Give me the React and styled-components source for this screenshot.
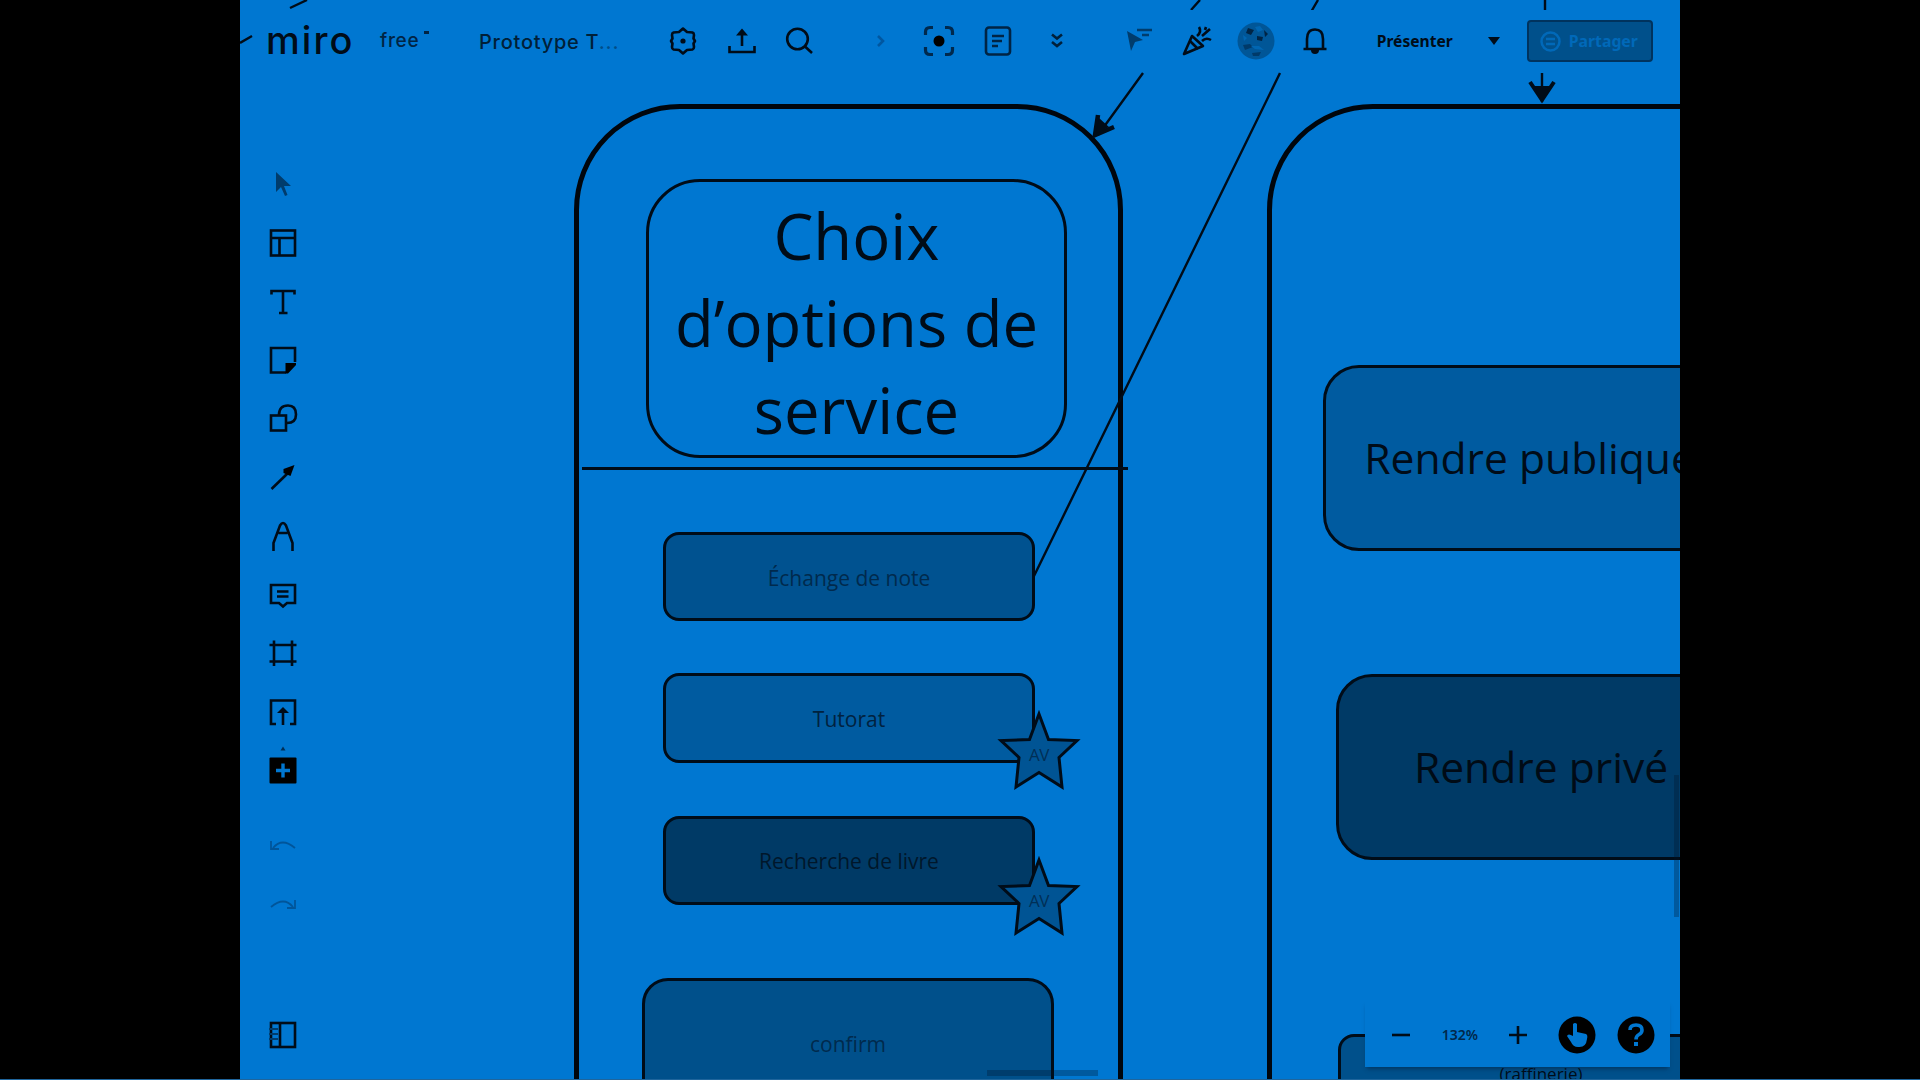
import React from 'react';
import styled, { createGlobalStyle, css } from 'styled-components';

const BLUE = '#0077d1';
const INK = '#000c18';

const GlobalStyle = createGlobalStyle`
  * {
    box-sizing: border-box;
  }

  body {
    margin: 0;
    background: #000;
    overflow: hidden;
  }
`;

const Screen = styled.div`
  position: relative;
  display: flex;
  justify-content: center;
  width: 1920px;
  height: 1080px;
  background: #000;
`;

const BottomEdge = styled.div`
  position: absolute;
  left: 0;
  right: 0;
  bottom: 0;
  height: 1px;
  background: #1f659c;
`;

const Board = styled.main`
  position: relative;
  width: 1440px;
  height: 1080px;
  overflow: hidden;
  background: ${BLUE};
  color: ${INK};
  font-family: 'Open Sans', 'Noto Sans', sans-serif;
`;

/* free canvas: every node carries its own board position */
const Node = styled.div`
  position: absolute;
  left: ${props => props.$x}px;
  top: ${props => props.$y}px;
  width: ${props => props.$w}px;
  height: ${props => props.$h}px;
  display: flex;
  align-items: center;
  justify-content: center;
  text-align: center;
  white-space: nowrap;
  border: 3px solid ${INK};
`;

const Phone = styled(Node)`
  border-width: 5px;
  border-color: #00060d;
  border-radius: 106px;
`;

const TitleNode = styled(Node)`
  border-radius: 54px;
  padding-top: 10px;
  font-size: 63.4px;
  line-height: 86.8px;
  white-space: pre-line;
`;

const OptionNode = styled(Node)`
  border-radius: ${props => props.$radius || 16}px;
  background: ${props => props.$fill};
  color: ${props => props.$color};
  font-size: ${props => props.$size || 21}px;
  line-height: 1.36;
  padding-top: ${props => props.$drop || 0}px;
`;

const Lines = styled.svg`
  position: absolute;
  inset: 0;
`;

const StarNode = styled.div`
  position: absolute;
  left: ${props => props.$x}px;
  top: ${props => props.$y}px;
  width: 84px;
  height: 82px;
  display: grid;
  place-items: center;
  color: #002f56;
  font-size: 17px;
  letter-spacing: -0.5px;

  svg,
  span {
    grid-area: 1 / 1;
  }

  span {
    padding-top: 7px;
  }
`;

const Header = styled.header`
  position: absolute;
  top: 10px;
  left: 13px;
  right: 12px;
  height: 62px;
  display: flex;
  font-family: Inter, 'Noto Sans', sans-serif;
`;

const HeaderGroup = styled.div`
  display: flex;
  align-items: center;
  background: ${BLUE};
  ${props => props.$width && css`
    width: ${props.$width}px;
  `}
  ${props => props.$before && css`
    margin-left: ${props.$before}px;
  `}
`;

const Slot = styled.div`
  display: flex;
  flex: none;
  align-items: center;
  justify-content: center;
  width: 58.6px;
  height: 62px;

  svg {
    display: block;
  }
`;

const Logo = styled.div`
  width: 127px;
  padding: 0 0 2px 13px;
  font-size: 38px;
  font-weight: 500;
  letter-spacing: 2.1px;
  line-height: 44px;
`;

const Plan = styled.div`
  width: 87px;
  display: flex;
  gap: 5px;
  font-size: 19px;
  font-weight: 500;
  line-height: 24px;
  letter-spacing: 0.7px;
  color: #002444;

  sup {
    width: 5px;
    height: 3px;
    margin-top: 2px;
    background: #002444;
  }
`;

const BoardName = styled.div`
  width: 187px;
  padding: 2px 0 0 12px;
  font-size: 20px;
  font-weight: 500;
  letter-spacing: 0.75px;
  color: #002038;

  span {
    color: #004d88;
  }
`;

const Present = styled.button`
  display: flex;
  align-items: center;
  gap: 35px;
  margin-left: 33px;
  padding: 0;
  border: 0;
  background: none;
  color: ${INK};
  font: 700 15.6px 'Noto Sans', sans-serif;
`;

const Share = styled.button`
  display: flex;
  align-items: center;
  gap: 8px;
  width: 126px;
  height: 42px;
  margin-left: 27px;
  padding: 0 0 0 11px;
  border: 2px solid #00335e;
  border-radius: 4px;
  background: #00508b;
  color: #0069b9;
  font: 700 15.8px 'Noto Sans', sans-serif;
`;

const Sidebar = styled.nav`
  position: absolute;
  left: 14px;
  top: 155px;
  width: 58.6px;
  display: flex;
  flex-direction: column;
`;

const Tool = styled(Slot)`
  height: 58.7px;
  color: ${props => (props.$faded ? '#00559a' : INK)};
  ${props => props.$gap && css`
    margin-top: ${props.$gap}px;
  `}
`;

const ZoomBar = styled.footer`
  position: absolute;
  left: 1125px;
  top: 1000px;
  width: 305px;
  height: 67px;
  display: flex;
  align-items: center;
  padding: 2px 0 0 7px;
  background: ${BLUE};
  box-shadow: 0 4px 4px -2px rgba(0, 30, 60, 0.5);
`;

const ZoomValue = styled(Slot)`
  color: #00284b;
  font: 600 14px 'Noto Sans', sans-serif;
`;

const Scrollbar = styled.div`
  position: absolute;
  left: ${props => props.$x}px;
  top: ${props => props.$y}px;
  width: ${props => props.$w}px;
  height: ${props => props.$h}px;
  background: rgba(0, 20, 40, 0.3);
`;

const Icon = ({ children, size = 30, width = 2.6, color = 'currentColor' }) => (
  <svg width={size} height={size} viewBox="0 0 30 30" fill="none" stroke={color} strokeWidth={width} overflow="visible">
    {children}
  </svg>
);

const GearIcon = () => (
  <Icon>
    <path
      d="M15 2.500 19 6 24.500 6.500Q26 7 26 9L25.500 12.500 27 15 25.500 17.500 26 21Q26 23 24.500 23.500L19 24 15 27.500 11 24 5.500 23.500Q4 23 4 21L4.500 17.500 3 15 4.500 12.500 4 9Q4 7 5.500 6.500L11 6Z"
      strokeLinejoin="round"
    />
    <circle cx="15" cy="15" r="2.600" fill="currentColor" stroke="none" />
  </Icon>
);

const ExportIcon = () => (
  <Icon>
    <path d="M15 20V5M2.500 20v6h25v-6" />
    <path d="M9 9.500 15 2.500l6 7Z" fill="currentColor" stroke="none" />
  </Icon>
);

const SearchIcon = () => (
  <Icon>
    <circle cx="12.500" cy="13" r="10.300" />
    <path d="m20 20.500 7 6.500" />
  </Icon>
);

const FocusIcon = () => (
  <Icon width={3.2} color="#00294d">
    <path d="M1.500 9V6q0-4.500 4.500-4.500H9M21 1.500h3q4.500 0 4.500 4.500v3M28.500 21v3q0 4.500-4.500 4.500h-3M9 28.500H6q-4.500 0-4.500-4.500v-3" />
    <circle cx="15" cy="15" r="5.500" fill="#000" stroke="none" />
  </Icon>
);

const NotesIcon = () => (
  <Icon color="#002444">
    <rect x="3" y="1.500" width="24" height="27" rx="3" />
    <path d="M9 10h12M9 15h10M9 20h6" />
  </Icon>
);

const PartyIcon = () => (
  <Icon>
    <path d="M10 10 21 20 2 28Z" strokeLinejoin="round" />
    <path d="m8 15 8 8M15 10q5-4 2-9M20 15q4-4 9-1M20 10l8-7M23 4l1-3" />
  </Icon>
);

const BellIcon = () => (
  <Icon>
    <path d="M4.500 23h23M8 23V13q0-9.500 8-9.500t8 9.500v10" />
    <path d="M12 24h8q0 4-4 4t-4-4Z" fill="currentColor" stroke="none" />
  </Icon>
);

const Avatar = () => (
  <svg width="38" height="38" viewBox="0 0 38 38">
    <circle cx="19" cy="19" r="18.500" fill="#005697" />
    <path d="M11 6l6 2-3 5-5-2zM20 14l6 1-1 4-5-1zM27 8l4 4-3 3z" fill="#002444" />
    <path d="M6 23l7-1 3 3-8 3zM15 31l9-1-2 4h-6z" fill="#003a69" />
    <path d="M18 5l5-1 3 4-5 2zM14 24h8l5 4-9-1zM6 13l4 3-3 3z" fill="#0066b2" />
  </svg>
);

const TOOLS = [
  { name: 'select', icon: <path d="M8 3v20l5-5 4 9 2.500-1-3.500-9h7Z" fill="#003c6c" stroke="none" /> },
  {
    name: 'templates',
    icon: (
      <>
        <rect x="3" y="2.500" width="24" height="25" />
        <path d="M3 10h24M11.500 10v17" />
      </>
    ),
  },
  { name: 'text', icon: <path d="M3.500 7.500V4h23v3.500M15 4v22M11 26h8.500" /> },
  {
    name: 'sticky',
    icon: (
      <>
        <path d="M27 17V3H3v24.500h15" />
        <path d="M17.500 28.500V18H28v2l-8 8.500Z" fill="#000" stroke="none" />
      </>
    ),
  },
  {
    name: 'shapes',
    icon: (
      <>
        <rect x="3" y="11.500" width="15" height="15" />
        <path d="M11 11q0-9.500 9-9.500 8 0 8 9 0 8.500-9 8.500" />
      </>
    ),
  },
  {
    name: 'line',
    icon: (
      <>
        <path d="M3.500 26 21 9" />
        <path d="m15.500 6 11-4-4 11-7-3Z" fill="#000" stroke="none" />
      </>
    ),
  },
  { name: 'pen', icon: <path d="M5.500 30V22L12 4.500Q15-.5 18 4.500L24.500 22v8M10.500 12h9" /> },
  {
    name: 'comment',
    icon: (
      <>
        <path d="M3 5h24v18h-8l-4 3.500L11 23H3Z" />
        <path d="M9 11.500h11.500M9 16.500h11.500" />
      </>
    ),
  },
  { name: 'frame', icon: <path d="M1.500 6h27M1.500 22.500h27M6 1.500v25.500M24 1.500v25.500" /> },
  {
    name: 'upload',
    icon: (
      <>
        <path d="M8 26H3V2.500h24V26h-5M15 27V12" />
        <path d="m9 15 6-6 6 6Z" fill="currentColor" stroke="none" />
      </>
    ),
  },
  {
    name: 'more',
    icon: (
      <>
        <rect x="1.500" y="1.500" width="27" height="26" rx="1" fill="#000" stroke="none" />
        <path d="M15 7.500v14M8 14.500h14" stroke={BLUE} strokeWidth="3.400" />
        <path d="M12.500-5.500l2.500-4 2.500 4z" fill="#002f56" stroke="none" />
      </>
    ),
  },
];

const STAR = 'M42 4 51.500 29.500 80 30.500 62 47.500 65 77 42 62.500 19 77 22 47.500 4 30.500 32.500 29.500Z';

const Star = ({ x, y }) => (
  <StarNode $x={x} $y={y}>
    <svg width="84" height="82" viewBox="0 0 84 82">
      <path d={STAR} fill="#005494" stroke={INK} strokeWidth="3" />
    </svg>
    <span>AV</span>
  </StarNode>
);

const App = () => (
  <>
    <GlobalStyle />
    <Screen>
      <Board>
        <Phone $x={334} $y={104} $w={549} $h={1180} />
        <Phone $x={1027} $y={104} $w={549} $h={1180} />

        <TitleNode $x={406} $y={179} $w={421} $h={279}>
          {'Choix\nd’options de\nservice'}
        </TitleNode>

        <OptionNode $x={423} $y={532} $w={372} $h={89} $fill="#005290" $color="#002a4d" $drop={3}>
          Échange de note
        </OptionNode>
        <OptionNode $x={423} $y={673} $w={372} $h={90} $fill="#005ba0" $color="#00223f" $drop={2}>
          Tutorat
        </OptionNode>
        <OptionNode $x={423} $y={816} $w={372} $h={89} $fill="#003a66" $color="#00172b" $drop={2}>
          Recherche de livre
        </OptionNode>
        <OptionNode $x={402} $y={978} $w={412} $h={132} $radius={26} $fill="#00508b" $color="#002a4d">
          confirm
        </OptionNode>

        <OptionNode $x={1083} $y={365} $w={413} $h={186} $radius={36} $size={42.6} $fill="#005ba0" $color={INK}>
          Rendre publique
        </OptionNode>
        <OptionNode $x={1096} $y={674} $w={410} $h={186} $radius={36} $size={42.6} $fill="#003a66" $color="#000b16">
          Rendre privé
        </OptionNode>
        <OptionNode $x={1098} $y={1034} $w={406} $h={80} $radius={16} $size={17} $fill="#00508b" $color={INK}>
          (raffinerie)
        </OptionNode>

        <Lines width="1440" height="1080" fill="none" stroke={INK} strokeWidth="2.4">
          <path d="M342 468.500H888" strokeWidth="3" />
          <path d="M67 0 50 8M0 43 12 36" />
          <path d="M960 0 951 10M903 73 858 135" />
          <path d="m858 115-3 20 19-8" strokeWidth="4.500" />
          <path d="m859 118-3 16 13-7Z" fill={INK} stroke="none" />
          <path d="M1078 0 1071 12M1040 73 794 576" />
          <path d="M1305 0v12M1302 73v29" />
          <path d="m1290 82 12 18 12-18" strokeWidth="4" />
          <path d="m1294 86 8 14 8-14Z" fill={INK} stroke="none" />
        </Lines>

        <Star x={757} y={710} />
        <Star x={757} y={856} />

        <Header>
          <HeaderGroup $width={578}>
            <Logo>miro</Logo>
            <Plan>
              free<sup />
            </Plan>
            <BoardName>
              Prototype T<span>...</span>
            </BoardName>
            <Slot><GearIcon /></Slot>
            <Slot><ExportIcon /></Slot>
            <Slot><SearchIcon /></Slot>
          </HeaderGroup>

          <HeaderGroup $before={20.5}>
            <Slot>
              <Icon color="#0057a0">
                <path d="m12 10 5 5-5 5" />
              </Icon>
            </Slot>
            <Slot><FocusIcon /></Slot>
            <Slot><NotesIcon /></Slot>
            <Slot>
              <Icon color="#00203a">
                <path d="m10 8.500 5 4 5-4M10 16l5 4 5-4" />
              </Icon>
            </Slot>
          </HeaderGroup>

          <HeaderGroup $width={558} $before={23.5}>
            <Slot>
              <Icon color="#003c6c">
                <path d="m3 5 4 20 4-9 8-2Z" fill="#003c6c" stroke="none" />
                <path d="M13 4h15M18 9h7" />
              </Icon>
            </Slot>
            <Slot><PartyIcon /></Slot>
            <Slot><Avatar /></Slot>
            <Slot><BellIcon /></Slot>
            <Present>
              Présenter
              <svg width="12" height="8" viewBox="0 0 12 8">
                <path d="M0 0h12L6 8Z" fill={INK} />
              </svg>
            </Present>
            <Share>
              <svg width="21" height="21" viewBox="0 0 21 21" fill="none" stroke="#0069b9" strokeWidth="2.500">
                <circle cx="10.500" cy="10.500" r="9" />
                <path d="M6 8h9M6 13h9" />
              </svg>
              Partager
            </Share>
          </HeaderGroup>
        </Header>

        <Sidebar>
          {TOOLS.map(tool => (
            <Tool key={tool.name}>
              <Icon>{tool.icon}</Icon>
            </Tool>
          ))}
          <Tool $faded $gap={16}>
            <Icon width={1.8}>
              <path d="M5 17q9-11 22 0M3 10v8h8" />
            </Icon>
          </Tool>
          <Tool $faded>
            <Icon width={1.8}>
              <path d="M25 17Q16 6 3 17M27 10v8h-8" />
            </Icon>
          </Tool>
          <Tool $gap={72}>
            <Icon>
              <rect x="3" y="3" width="24" height="24" />
              <path d="M12 3v24" />
              <path d="M1 9h9M1 14h9M1 19h9" stroke="#003c6c" strokeWidth="2" />
            </Icon>
          </Tool>
        </Sidebar>

        <Scrollbar $x={1434} $y={775} $w={5} $h={142} />
        <Scrollbar $x={747} $y={1070} $w={111} $h={6} />

        <ZoomBar>
          <Slot>
            <Icon><path d="M6 15h18" /></Icon>
          </Slot>
          <ZoomValue>132%</ZoomValue>
          <Slot>
            <Icon><path d="M6 15h18M15 6v18" /></Icon>
          </Slot>
          <Slot>
            <svg width="38" height="38" viewBox="0 0 38 38">
              <circle cx="19" cy="19" r="18.500" fill="#000" />
              <path d="M15 8q2-2 4 0v8l9 2q2 1 1 5-1 9-9 8-5 0-7-5l-4-6q1-3 6 0Z" fill={BLUE} />
            </svg>
          </Slot>
          <Slot>
            <svg width="38" height="38" viewBox="0 0 38 38">
              <circle cx="19" cy="19" r="18.500" fill="#000" />
              <path d="M13 14q0-5 6-5t6 5q0 3-3 4.500t-3 5" fill="none" stroke={BLUE} strokeWidth="3.600" />
              <rect x="17" y="26" width="4" height="4" fill={BLUE} />
            </svg>
          </Slot>
        </ZoomBar>
      </Board>
      <BottomEdge />
    </Screen>
  </>
);

export default App;
